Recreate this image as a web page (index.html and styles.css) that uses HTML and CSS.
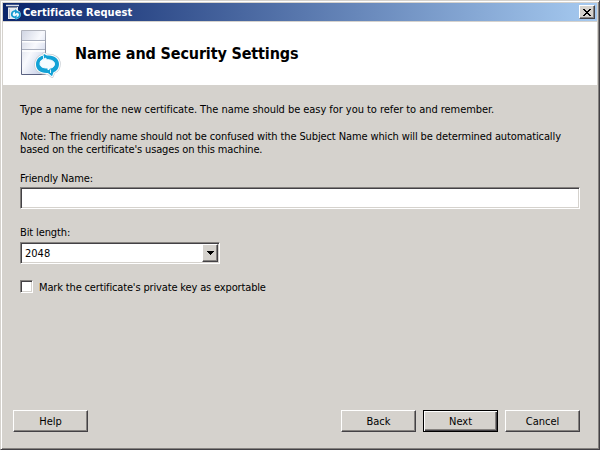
FILE: index.html
```html
<!DOCTYPE html>
<html lang="en">
<head>
<meta charset="utf-8">
<title>Certificate Request</title>
<link rel="stylesheet" href="styles.css">
</head>
<body>
<main class="window">
  <header class="titlebar">
    <svg class="small-icon" viewBox="0 0 16 16">
      <path d="M3 3h10v12H3z" fill="#e6e9ef"/>
      <path d="M1 1.500h13" stroke="#d9dde5" stroke-width="1.500"/><path d="M3 3.500h9" stroke="#8b92a3"/><path d="M4.500 5v9" stroke="#b9bec9"/>
      <ellipse cx="10.800" cy="10.500" rx="5" ry="4.700" fill="#e8f8ff"/>
      <path d="M10 6.800C5.500 8 6 12.500 9.500 13.200M11.700 14.200c4.500-1.200 4-5.700.5-6.400" fill="none" stroke="#169bd0" stroke-width="1.700"/>
      <path d="M10 5l3.200 2.700L10 10zM11.700 16l-3.200-2.700 3.200-2.300z" fill="#169bd0"/>
    </svg>
    <span class="caption">Certificate Request</span>
    <button class="close" aria-label="Close"><svg width="8" height="7" viewBox="0 0 8 7" shape-rendering="crispEdges"><path d="M0 0h2v1h1v1h2V1h1V0h2v1H7v1H6v1H5v1h1v1h1v1h1v1H6V6H5V5H3v1H2v1H0V6h1V5h1V4h1V3H2V2H1V1H0z"/></svg></button>
  </header>
  <section class="banner">
    <svg class="server-icon" viewBox="0 0 42 52">
      <defs>
        <linearGradient id="face" x1="0" y1="0" x2="1" y2="1"><stop offset="0" stop-color="#cfd4e2"/><stop offset=".45" stop-color="#f8f9fd"/><stop offset="1" stop-color="#bcc7e3"/></linearGradient>
        <linearGradient id="edge" x1="0" y1="0" x2="0" y2="1"><stop offset="0" stop-color="#b1b4bd"/><stop offset="1" stop-color="#596180"/></linearGradient>
        <path id="badge" d="M25 26l3 1.500c7-.8 12 3.200 12 8.500 0 4.500-2.500 7.200-5.500 8.200l-1.500 4-4-3.200c-8 .5-12-3.500-12-8.500 0-4.800 3-8.200 7-8.700z"/>
      </defs>
      <path d="M2.500 2.500h24v44h-24z" fill="url(#face)" stroke="url(#edge)"/>
      <path d="M3 12.500h23M3 21.500h23" stroke="#aab0bf"/><path d="M3 13.800h23M3 23h23" stroke="#fff" stroke-width="1.500"/>
      <g stroke-linejoin="round">
        <use href="#badge" fill="#fff" stroke="#c9cfd5" stroke-width="3.500"/>
        <use href="#badge" fill="#12a2d6" stroke="#fff" stroke-width="2"/>
        <use href="#badge" fill="#12a2d6"/>
        <path d="M24 31.500l3-1.500v1.700c5.500-.2 8.500 1.500 8.500 4.200 0 2.300-1.500 3.700-4 4.200l-2.500 1.800v-1.900c-5.500.2-8-1.500-8-4.200 0-2.200 1-3.700 3-4.300z" fill="#f5fcff" stroke="#f5fcff"/>
        <path d="M24.500 27.500v3.500M31.500 41.500V45" stroke="#dff5fc" stroke-width="1"/>
      </g>
    </svg>
    <h1><span class="t-heading">Name and Security Settings</span></h1>
  </section>
  <section class="content">
    <p class="intro"><span class="t-intro">Type a name for the new certificate. The name should be easy for you to refer to and remember.</span></p>
    <p class="note"><span class="t-note1">Note: The friendly name should not be confused with the Subject Name which will be determined automatically</span><br><span class="t-note2">based on the certificate's usages on this machine.</span></p>
    <label class="name-label" for="name"><span class="t-name">Friendly Name:</span></label>
    <input class="sunken name" id="name" type="text">
    <label class="bits-label"><span class="t-name">Bit length:</span></label>
    <div class="sunken combo"><span class="value">2048</span><span class="drop"><svg width="7" height="4" viewBox="0 0 7 4" shape-rendering="crispEdges"><path d="M0 0h7v1H6v1H5v1H4v1H3V3H2V2H1V1H0z"/></svg></span></div>
    <label class="check"><span class="sunken box"></span><span class="t-check">Mark the certificate's private key as exportable</span></label>
  </section>
  <footer class="actions">
    <button class="btn help">Help</button>
    <button class="btn">Back</button>
    <button class="btn default">Next</button>
    <button class="btn">Cancel</button>
  </footer>
</main>
</body>
</html>
```
FILE: styles.css
```css
* { box-sizing: border-box; }
body { margin: 0; background: #d5d2cd; color: #000; font: 11px/13px "DejaVu Sans Condensed", "DejaVu Sans", sans-serif; font-stretch: condensed; }
h1, p { margin: 0; }
span { white-space: nowrap; }
button { font: inherit; color: inherit; padding: 0; }
.window { width: 600px; height: 450px; display: flex; flex-direction: column; background: #d5d2cd; border: 1px solid #d5d2cd; border-right-color: #434145; border-bottom-color: #434145; box-shadow: inset 1px 1px #fff, inset -1px -1px #85827f; padding: 2px; }
.titlebar { height: 18px; display: flex; align-items: center; background: linear-gradient(90deg, #0a246a, #a6caf0); padding: 0 2px; margin-bottom: 1px; }
.small-icon { width: 16px; height: 16px; margin-right: 2px; }
.caption { flex: 1; color: #fff; font-weight: bold; letter-spacing: .07px; }
.close { width: 16px; height: 14px; display: flex; align-items: center; justify-content: center; background: #d5d2cd; border: 1px solid; border-color: #fff #434145 #434145 #fff; box-shadow: inset -1px -1px #85827f; }
.banner { height: 63px; background: #fff; display: flex; align-items: center; padding-left: 16px; }
.server-icon { width: 42px; height: 52px; margin-top: 1px; }
h1 { font-size: 16px; line-height: 22px; margin: 1px 0 0 14px; }
.t-heading { letter-spacing: -.14px; }
.t-intro { letter-spacing: -.053px; }
.t-note1 { letter-spacing: -.115px; }
.t-note2 { letter-spacing: -.14px; }
.t-name { letter-spacing: -.12px; }
.t-check { letter-spacing: -.15px; }
.content { flex: 1; padding: 18px 17px 0; display: flex; flex-direction: column; align-items: flex-start; }
.note { margin-top: 14px; }
.name-label { margin-top: 16px; }
.sunken { background: #fff; border: 1px solid; border-color: #85827f #fff #fff #85827f; box-shadow: inset 1px 1px #434145, inset -1px -1px #d5d2cd; }
.name { width: 560px; height: 22px; margin-top: 2px; outline: 0; }
.bits-label { margin-top: 17px; }
.combo { width: 200px; height: 22px; margin-top: 3px; padding: 1px 1px 1px 4px; display: flex; align-items: center; justify-content: space-between; }
.drop { width: 16px; height: 18px; display: flex; align-items: center; justify-content: center; background: #d5d2cd; border: 1px solid; border-color: #fff #434145 #434145 #fff; box-shadow: inset -1px -1px #85827f; }
.check { display: flex; align-items: flex-start; gap: 6px; margin-top: 16px; }
.box { width: 13px; height: 13px; }
.check .t-check { margin-top: 1px; }
.actions { display: flex; padding: 0 17px 15px 10px; }
.btn { width: 75px; height: 22px; margin-left: 7px; text-align: center; background: #d5d2cd; border: 1px solid; border-color: #fff #434145 #434145 #fff; box-shadow: inset -1px -1px #85827f; }
.help { margin: 0 auto 0 0; }
.default { border-color: #000; box-shadow: inset 1px 1px #fff, inset -1px -1px #434145, inset -2px -2px #85827f; }
```
